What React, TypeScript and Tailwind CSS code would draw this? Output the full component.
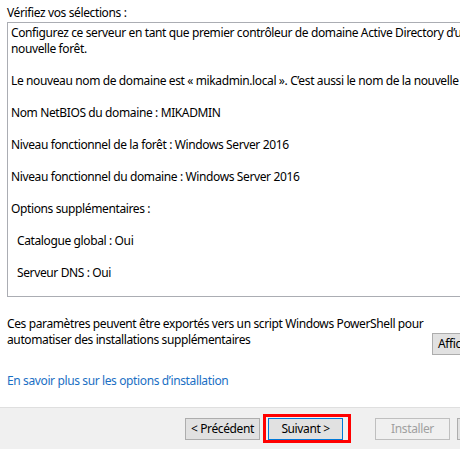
import React from "react";

export default function App() {
  const font = { fontFamily: '"Segoe UI", "Noto Sans", "Open Sans", sans-serif' };
  return (
    <div
      className="w-[460px] h-[449px] overflow-hidden bg-white flex flex-col text-[12px] leading-[16px] tracking-[-0.38px] text-[#000000]"
      style={font}
    >
      <div className="h-[407px] shrink-0 flex flex-col pl-[7px] bg-white">
        <div className="mt-[5px] h-[16px] whitespace-nowrap">Vérifiez vos sélections :</div>
        <div className="mt-[1px] w-[560px] h-[275px] shrink-0 border border-[#abadb3] bg-white pt-[2px] pl-[3px] whitespace-nowrap">
          <div>Configurez ce serveur en tant que premier contrôleur de domaine Active Directory d’une</div>
          <div>nouvelle forêt.</div>
          <div className="h-[16px]" />
          <div>Le nouveau nom de domaine est « mikadmin.local ». C’est aussi le nom de la nouvelle forêt.</div>
          <div className="h-[16px]" />
          <div>Nom NetBIOS du domaine : MIKADMIN</div>
          <div className="h-[16px]" />
          <div>Niveau fonctionnel de la forêt : Windows Server 2016</div>
          <div className="h-[16px]" />
          <div>Niveau fonctionnel du domaine : Windows Server 2016</div>
          <div className="h-[16px]" />
          <div>Options supplémentaires :</div>
          <div className="h-[16px]" />
          <div className="pl-[6px]">Catalogue global : Oui</div>
          <div className="h-[16px]" />
          <div className="pl-[6px]">Serveur DNS : Oui</div>
        </div>
        <div className="mt-[19px] flex items-start">
          <div className="w-[425px] shrink-0 whitespace-nowrap">
            Ces paramètres peuvent être exportés vers un script Windows PowerShell pour
            <br />
            automatiser des installations supplémentaires
          </div>
          <button className="mt-[17px] h-[22px] w-[100px] shrink-0 border border-[#adadad] bg-[#e1e1e1] text-left pl-[5px] leading-[20px]">
            Afficher le script
          </button>
        </div>
        <div className="mt-[18px] h-[16px] whitespace-nowrap text-[#1a6fc4]">
          En savoir plus sur les options d’installation
        </div>
      </div>
      <div className="relative flex-1 border-t border-[#dfdfdf] bg-[#f0f0f0] flex items-start pt-[10px] pl-[185px]">
        <button className="h-[22px] w-[75px] shrink-0 border border-[#adadad] bg-[#e1e1e1] leading-[20px] text-center">
          &lt; Précédent
        </button>
        <div className="relative ml-[8px] shrink-0">
          <button className="h-[22px] w-[75px] border border-[#0078d7] bg-[#e1e1e1] leading-[20px] text-center">
            Suivant &gt;
          </button>
          <div className="pointer-events-none absolute left-[-5px] top-[-4px] w-[88px] h-[29px] border-[3px] border-[#ff0000]" />
        </div>
        <button className="ml-[32px] h-[22px] w-[75px] shrink-0 border border-[#bfbfbf] bg-[#f0f0f0] leading-[20px] text-center text-[#a0a0a0]">
          Installer
        </button>
        <button className="ml-[7px] h-[22px] w-[75px] shrink-0 border border-[#adadad] bg-[#e1e1e1] leading-[20px] text-center">
          Annuler
        </button>
      </div>
    </div>
  );
}
